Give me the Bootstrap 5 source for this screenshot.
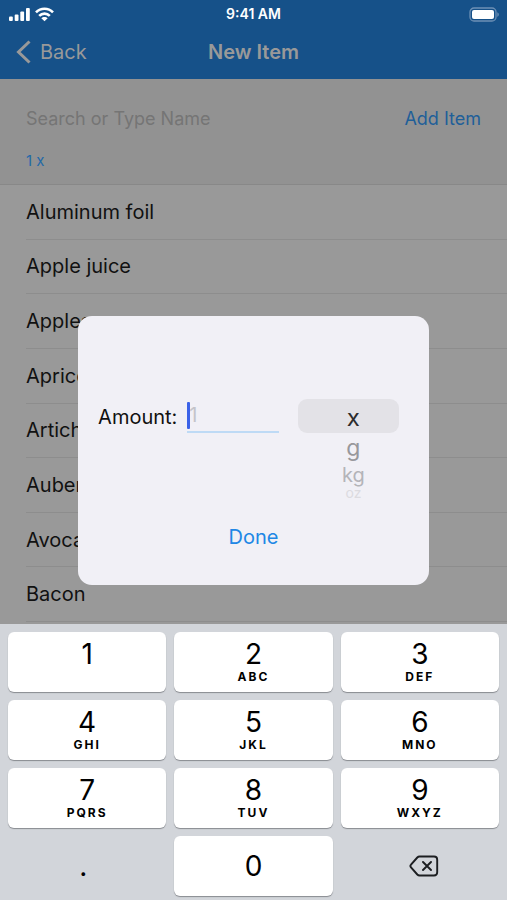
<!DOCTYPE html>
<html lang="en">
<head>
<meta charset="utf-8">
<meta name="viewport" content="width=device-width, initial-scale=1">
<title>New Item</title>
<link href="https://cdn.jsdelivr.net/npm/bootstrap@5.3.0/dist/css/bootstrap.min.css" rel="stylesheet">
<style>
body{font-family:Inter,"Liberation Sans",sans-serif;background:#999;color:#111;font-size:20px;line-height:28px}
button{font:inherit;color:inherit;border:0;background:none;padding:0}
.topbar{background:#165189;color:#999}
.status{height:28px;padding:0 8px;color:#fff;font-size:14px;font-weight:600}
.navrow{height:51px;padding:0 16px;line-height:48px}
.side{flex:1 1 0}
.finder{background:#929292;border-bottom:1px solid #888;padding:26px 26px 11px;font-size:18px}
.finder input{border:0;background:none;padding:0;outline:0;min-width:0;color:#111}
.finder input::placeholder{color:#757575;opacity:1}
.finder .add{color:#1f5f99}
.qty{color:#2469a8;font-size:15px;line-height:24px}
.items{padding-bottom:2px}
.item{border-bottom:1px solid #8d8d8d;margin-left:26px;min-height:48px}
.keys{display:grid;grid-template-columns:repeat(3,1fr);grid-auto-rows:60px;gap:8px;padding:8px 8px 4px;background:#d2d5da;color:#000}
.key{background:#fff;border-radius:6px;box-shadow:0 1px 1px #888b90}
.digit{font-size:28px;line-height:30px}
.letters{font-size:12px;font-weight:700;line-height:16px;letter-spacing:2px;min-height:16px}
.sheet{width:69.2%;background:#f1f0f6;border-radius:14px;padding:83px 20px 34px}
.amount{width:92px;margin-left:10px}
.amount input{border:0;border-bottom:2px solid #bedaf5;border-radius:0;background:none;padding:0 0 0 2px;width:100%;outline:0;height:34px}
.amount input::placeholder{color:#c4c4ca;opacity:1}
.caret{width:3px;height:27px;background:#3b62e8;top:3px;left:0;border-radius:1px}
.wheel{width:101px;margin:0 10px 0 auto}
.wheel button{display:block;width:100%;padding-left:10px}
.wheel .w-on{background:#e3e2e7;border-radius:9px;height:34px;font-size:24px;line-height:34px;padding-top:2px;color:#2c2c2e}
.wheel .w-one{font-size:23px;line-height:30px;color:#98989c}
.wheel .w-two{font-size:20px;line-height:24px;color:#b4b4b9}
.wheel .w-three{font-size:14px;line-height:12px;color:#dcdbe0}
.sheet .done{color:#2087e5}
</style>
<script src="https://cdn.jsdelivr.net/npm/bootstrap@5.3.0/dist/js/bootstrap.bundle.min.js"></script>
</head>
<body>
<div class="position-relative min-vh-100 d-flex flex-column">
  <header class="topbar">
    <div class="status d-flex align-items-center">
      <div class="side d-flex align-items-center gap-1">
        <svg width="23" height="15" viewBox="0 0 23 15" fill="#fff" aria-hidden="true"><rect x="1" y="9.500" width="3.800" height="4.500" rx="1"/><rect x="6.700" y="7.500" width="3.800" height="6.500" rx="1"/><rect x="12.300" y="4.500" width="3.800" height="9.500" rx="1"/><rect x="18" y="1" width="3.800" height="13" rx="1"/></svg>
        <svg width="19" height="15" viewBox="0 0 19 15" fill="none" stroke="#fff" stroke-width="2.600" aria-hidden="true"><path d="M1 5.400C5.800.5 13.200.5 18 5.400M4.200 8.900c3-3 7.600-3 10.600 0"/><path d="M9.500 14.200 6.300 11.200c1.700-1.700 4.700-1.700 6.400 0z" fill="#fff" stroke="none"/></svg>
      </div>
      <div>9:41 AM</div>
      <div class="side d-flex justify-content-end">
        <svg width="31" height="15" viewBox="0 0 31 15" aria-hidden="true"><rect x="2" y="1" width="26" height="13" rx="4" fill="none" stroke="#6d90b5" stroke-width="1.300"/><rect x="4" y="3" width="22" height="9" rx="2" fill="#fff"/><path d="M29.300 5.200c2 .8 2 3.800 0 4.600z" fill="#6d90b5"/></svg>
      </div>
    </div>
    <nav class="navrow d-flex" aria-label="Main">
      <div class="side"><button type="button" class="d-flex align-items-center"><svg class="me-2" width="16" height="26" viewBox="0 0 16 26" fill="none" stroke="#999" stroke-width="3" aria-hidden="true"><path d="M13.500 2.500 2.500 13l11 10.500"/></svg>Back</button></div>
      <div class="fw-semibold">New Item</div>
      <div class="side"></div>
    </nav>
  </header>
  <section class="finder">
    <div class="d-flex">
      <input class="flex-grow-1" type="text" placeholder="Search or Type Name" aria-label="Search or Type Name">
      <button type="button" class="add">Add Item</button>
    </div>
    <button type="button" class="qty mt-3 d-block">1 x</button>
  </section>
  <ul class="items list-unstyled mb-0 flex-grow-1 d-flex flex-column">
    <li class="item side d-flex align-items-center">Aluminum foil</li>
    <li class="item side d-flex align-items-center">Apple juice</li>
    <li class="item side d-flex align-items-center">Apples</li>
    <li class="item side d-flex align-items-center">Apricots</li>
    <li class="item side d-flex align-items-center">Artichokes</li>
    <li class="item side d-flex align-items-center">Aubergine</li>
    <li class="item side d-flex align-items-center">Avocado</li>
    <li class="item side d-flex align-items-center">Bacon</li>
  </ul>
  <div class="keys">
    <button type="button" class="key"><div class="digit">1</div><div class="letters"></div></button>
    <button type="button" class="key"><div class="digit">2</div><div class="letters">ABC</div></button>
    <button type="button" class="key"><div class="digit">3</div><div class="letters">DEF</div></button>
    <button type="button" class="key"><div class="digit">4</div><div class="letters">GHI</div></button>
    <button type="button" class="key"><div class="digit">5</div><div class="letters">JKL</div></button>
    <button type="button" class="key"><div class="digit">6</div><div class="letters">MNO</div></button>
    <button type="button" class="key"><div class="digit">7</div><div class="letters">PQRS</div></button>
    <button type="button" class="key"><div class="digit">8</div><div class="letters">TUV</div></button>
    <button type="button" class="key"><div class="digit">9</div><div class="letters">WXYZ</div></button>
    <button type="button" class="digit pe-2">.</button>
    <button type="button" class="key digit">0</button>
    <button type="button" class="ps-2 lh-1" aria-label="Delete"><svg width="30" height="24" viewBox="0 0 30 24" fill="none" stroke="#1c1e21" stroke-width="1.900" stroke-linejoin="round" stroke-linecap="round" aria-hidden="true"><path d="M10.500 2.500H25q3.200 0 3.200 3.200v12.600q0 3.200-3.200 3.200H10.500q-1.200 0-2.200-1L2 13.300q-1.200-1.300 0-2.600l6.300-7.200q1-1 2.200-1zM14 8l8 8M22 8l-8 8"/></svg></button>
  </div>
  <div class="position-absolute top-0 start-0 w-100 h-100 d-flex align-items-center justify-content-center">
    <div class="sheet" role="dialog" aria-label="Amount">
      <div class="d-flex align-items-start">
        <label for="amount" class="pt-1">Amount:</label>
        <div class="amount position-relative"><input id="amount" type="text" inputmode="decimal" placeholder="1"><span class="caret position-absolute"></span></div>
        <div class="wheel" role="listbox" aria-label="Unit">
          <button type="button" role="option" aria-selected="true" class="w-on">x</button>
          <button type="button" role="option" aria-selected="false" class="w-one">g</button>
          <button type="button" role="option" aria-selected="false" class="w-two">kg</button>
          <button type="button" role="option" aria-selected="false" class="w-three">oz</button>
        </div>
      </div>
      <div class="text-center mt-4"><button type="button" class="done">Done</button></div>
    </div>
  </div>
</div>
</body>
</html>
